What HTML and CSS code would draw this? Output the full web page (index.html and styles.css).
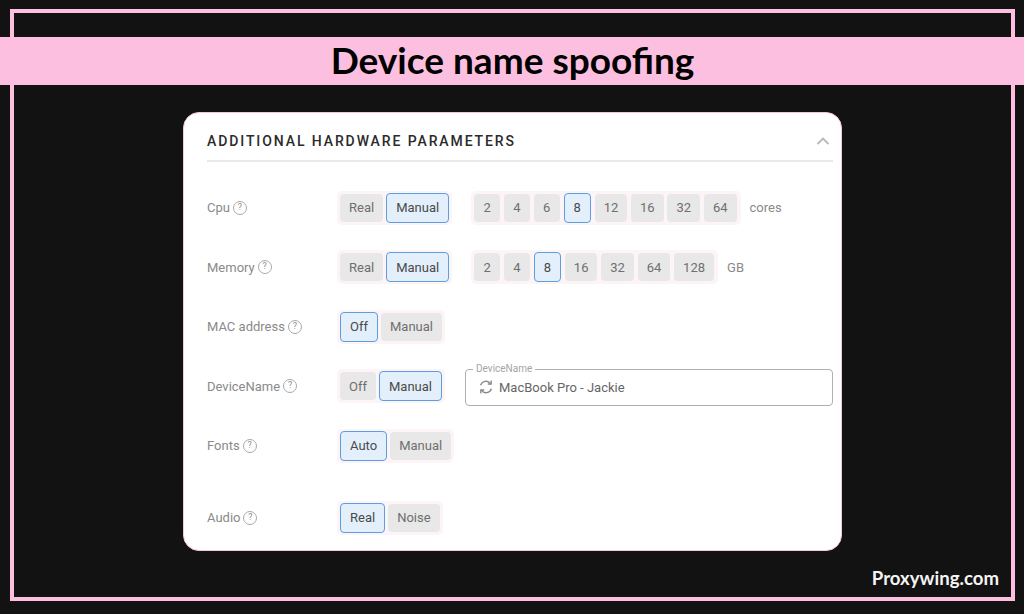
FILE: index.html
```html
<!DOCTYPE html>
<html lang="en">
<head>
    <meta charset="UTF-8">
    <meta name="viewport" content="width=device-width, initial-scale=1.0">
    <title>Device name spoofing</title>
    <link rel="stylesheet" href="styles.css">
</head>
<body>
    <div class="frame">
        <h1 class="banner">Device name spoofing</h1>

        <div class="card">
            <div class="card-header">
                <h2>ADDITIONAL HARDWARE PARAMETERS</h2>
                <svg class="chevron" width="14" height="8" viewBox="0 0 14 8"><path d="M1.5 7 7 1.6 12.5 7"/></svg>
            </div>

            <div class="row">
                <div class="label">Cpu <span class="help">?</span></div>
                <div class="seg">
                    <button class="btn">Real</button>
                    <button class="btn active">Manual</button>
                </div>
                <div class="seg nums">
                    <button class="btn">2</button>
                    <button class="btn">4</button>
                    <button class="btn">6</button>
                    <button class="btn active">8</button>
                    <button class="btn">12</button>
                    <button class="btn">16</button>
                    <button class="btn">32</button>
                    <button class="btn">64</button>
                </div>
                <span class="unit">cores</span>
            </div>

            <div class="row">
                <div class="label">Memory <span class="help">?</span></div>
                <div class="seg">
                    <button class="btn">Real</button>
                    <button class="btn active">Manual</button>
                </div>
                <div class="seg nums">
                    <button class="btn">2</button>
                    <button class="btn">4</button>
                    <button class="btn active">8</button>
                    <button class="btn">16</button>
                    <button class="btn">32</button>
                    <button class="btn">64</button>
                    <button class="btn">128</button>
                </div>
                <span class="unit">GB</span>
            </div>

            <div class="row">
                <div class="label">MAC address <span class="help">?</span></div>
                <div class="seg">
                    <button class="btn active">Off</button>
                    <button class="btn">Manual</button>
                </div>
            </div>

            <div class="row">
                <div class="label">DeviceName <span class="help">?</span></div>
                <div class="seg">
                    <button class="btn">Off</button>
                    <button class="btn active">Manual</button>
                </div>
                <div class="name-field">
                    <span class="name-legend">DeviceName</span>
                    <svg class="sync" width="16" height="16" viewBox="0 0 16 16">
                        <path d="M2.6 6.2A5.7 5.7 0 0 1 12.6 4.6M13.4 9.8A5.7 5.7 0 0 1 3.4 11.4"/>
                        <path d="M13.2 1.6V5H9.8M2.8 14.4V11h3.4"/>
                    </svg>
                    <span>MacBook Pro - Jackie</span>
                </div>
            </div>

            <div class="row">
                <div class="label">Fonts <span class="help">?</span></div>
                <div class="seg">
                    <button class="btn active">Auto</button>
                    <button class="btn">Manual</button>
                </div>
            </div>

            <div class="row audio-row">
                <div class="label">Audio <span class="help">?</span></div>
                <div class="seg">
                    <button class="btn active">Real</button>
                    <button class="btn">Noise</button>
                </div>
            </div>
        </div>

        <div class="brand">Proxywing.com</div>
    </div>
</body>
</html>
```

FILE: styles.css
```css
html, body {
    height: 100%;
}
body {
    margin: 0;
    background-color: #121212;
    font-family: Roboto, Arial, sans-serif;
    overflow: hidden;
}
.frame {
    position: relative;
    box-sizing: border-box;
    height: 592px;
    margin: 9px 9px 0 10px;
    padding-top: 24px;
    border: 4px solid #fdbfdf;
}
.banner {
    height: 48px;
    margin: 0 -14px 27px -14px;
    background-color: #fdbfdf;
    color: #000;
    font-family: Lato, sans-serif;
    font-size: 37px;
    font-weight: 700;
    line-height: 46px;
    text-align: center;
}
.card {
    box-sizing: border-box;
    width: 659px;
    height: 439px;
    margin-left: 169px;
    padding: 0 8px 0 23px;
    background-color: #fff;
    border: 1px solid #f7c6de;
    border-radius: 16px;
}
.card-header {
    display: flex;
    align-items: center;
    justify-content: space-between;
    height: 38px;
    margin-bottom: 16px;
    padding-top: 9px;
    border-bottom: 2px solid #e9e9e9;
}
.card-header h2 {
    margin: 0;
    color: #2b2b2b;
    font-size: 14px;
    font-weight: 500;
    letter-spacing: 1.9px;
}
.chevron {
    margin-right: 3px;
}
.chevron path {
    fill: none;
    stroke: #b9b9b9;
    stroke-width: 2;
}
.row {
    display: flex;
    align-items: center;
    height: 59.5px;
}
.audio-row {
    margin-top: 12.5px;
}
.label {
    display: flex;
    align-items: center;
    gap: 3px;
    width: 130px;
    flex-shrink: 0;
    color: #8a8a8a;
    font-size: 13px;
}
.help {
    display: block;
    box-sizing: border-box;
    width: 14px;
    height: 14px;
    border: 1.5px solid #aaa;
    border-radius: 50%;
    color: #8f8f8f;
    font-size: 9px;
    line-height: 11px;
    text-align: center;
}
.seg {
    display: flex;
    align-items: center;
    gap: 3px;
    padding: 2px 3px;
    background-color: #fdf4f8;
    border-radius: 5px;
}
.nums {
    gap: 3.8px;
    margin-left: 19px;
    padding-right: 4px;
}
.btn {
    box-sizing: border-box;
    height: 28px;
    padding: 0 9px;
    background-color: #e8e8e8;
    border: none;
    border-radius: 4px;
    color: #6f6f6f;
    font-family: Roboto, Arial, sans-serif;
    font-size: 13px;
}
.nums .btn {
    min-width: 26px;
}
.btn.active {
    height: 30px;
    background-color: #e3f0fb;
    border: 1.5px solid #5b9fe2;
    color: #4a4a4a;
}
.unit {
    margin-left: 9px;
    color: #8a8a8a;
    font-size: 13px;
}
.name-field {
    position: relative;
    display: flex;
    align-items: center;
    gap: 5px;
    box-sizing: border-box;
    width: 369px;
    height: 37px;
    margin: 2px 0 0 20px;
    padding-left: 12px;
    border: 1.5px solid #b4adb0;
    border-radius: 4px;
    color: #666;
    font-size: 13px;
}
.name-legend {
    position: absolute;
    top: -7px;
    left: 7px;
    padding: 0 3px;
    background-color: #fff;
    color: #a5a5a5;
    font-size: 10px;
    line-height: 12px;
}
.sync path {
    fill: none;
    stroke: #888;
    stroke-width: 1.3;
}
.brand {
    position: absolute;
    right: 12px;
    bottom: 8px;
    color: #f4f4f4;
    font-family: Lato, sans-serif;
    font-size: 18.6px;
    font-weight: 700;
}
```
